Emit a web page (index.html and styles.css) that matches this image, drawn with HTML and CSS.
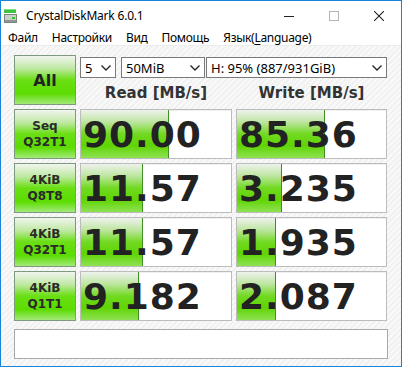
FILE: index.html
```html
<!DOCTYPE html>
<html lang="ru">
<head>
    <meta charset="UTF-8">
    <title>CrystalDiskMark 6.0.1</title>
    <link rel="stylesheet" href="styles.css">
</head>
<body>
<div class="window">
    <div class="titlebar">
        <svg class="app-icon" width="14" height="16" viewBox="0 0 14 16">
            <rect x="0" y="1" width="12" height="4" fill="#3fc43f"/>
            <rect x="0" y="1" width="12" height="1" fill="#7ee07e"/>
            <rect x="0.5" y="6.5" width="12" height="8" fill="#c9cfc9" stroke="#7d867d"/>
            <rect x="1" y="12" width="11" height="2" fill="#8f988f"/>
            <rect x="8" y="9" width="3" height="2" fill="#35c235"/>
        </svg>
        <span class="title">CrystalDiskMark 6.0.1</span>
        <div class="controls">
            <span class="ctl"><svg width="10" height="10" viewBox="0 0 10 10"><line x1="0" y1="5.5" x2="10" y2="5.5" stroke="#222"/></svg></span>
            <span class="ctl"><svg width="10" height="10" viewBox="0 0 10 10"><rect x="0.5" y="0.5" width="9" height="9" fill="none" stroke="#b5b5b5"/></svg></span>
            <span class="ctl"><svg width="10" height="10" viewBox="0 0 10 10"><path d="M0 0L10 10M10 0L0 10" stroke="#222" stroke-width="1.1"/></svg></span>
        </div>
    </div>

    <div class="menubar">
        <span>Файл</span>
        <span>Настройки</span>
        <span>Вид</span>
        <span>Помощь</span>
        <span>Язык(<u>L</u>anguage)</span>
    </div>

    <div class="client">
        <div class="board">
            <div class="btn all">All</div>
            <div class="top-panel">
                <div class="selects">
                    <div class="select count">5<svg width="10" height="6" viewBox="0 0 10 6"><path d="M0.5 0.5L5 5L9.5 0.5" fill="none" stroke="#222" stroke-width="1.3"/></svg></div>
                    <div class="select size">50MiB<svg width="10" height="6" viewBox="0 0 10 6"><path d="M0.5 0.5L5 5L9.5 0.5" fill="none" stroke="#222" stroke-width="1.3"/></svg></div>
                    <div class="select drive">H: 95% (887/931GiB)<svg width="10" height="6" viewBox="0 0 10 6"><path d="M0.5 0.5L5 5L9.5 0.5" fill="none" stroke="#222" stroke-width="1.3"/></svg></div>
                </div>
                <div class="heads">
                    <div>Read [MB/s]</div>
                    <div>Write [MB/s]</div>
                </div>
            </div>

            <div class="btn test">Seq<br>Q32T1</div>
            <div class="meter"><div class="fill" style="width: 88px"></div><span class="value">90.00</span></div>
            <div class="meter"><div class="fill" style="width: 88px"></div><span class="value">85.36</span></div>

            <div class="btn test">4KiB<br>Q8T8</div>
            <div class="meter"><div class="fill" style="width: 62px"></div><span class="value">11.57</span></div>
            <div class="meter"><div class="fill" style="width: 45px"></div><span class="value">3.235</span></div>

            <div class="btn test">4KiB<br>Q32T1</div>
            <div class="meter"><div class="fill" style="width: 62px"></div><span class="value">11.57</span></div>
            <div class="meter"><div class="fill" style="width: 39px"></div><span class="value">1.935</span></div>

            <div class="btn test">4KiB<br>Q1T1</div>
            <div class="meter"><div class="fill" style="width: 58px"></div><span class="value">9.182</span></div>
            <div class="meter"><div class="fill" style="width: 39px"></div><span class="value">2.087</span></div>
        </div>
        <div class="comment"></div>
    </div>
</div>
</body>
</html>
```

FILE: styles.css
```css
body {
    margin: 0;
    padding: 0;
    overflow: hidden;
    background-color: #fff;
}

.window {
    width: 402px;
    height: 367px;
    box-sizing: border-box;
    border: 1px solid #1883d7;
    display: flex;
    flex-direction: column;
    overflow: hidden;
    font-family: "Noto Sans", "DejaVu Sans", sans-serif;
    color: #000;
}

.titlebar {
    height: 29px;
    display: flex;
    align-items: center;
    background-color: #fff;
    flex-shrink: 0;
}

.app-icon {
    margin-left: 3px;
    margin-right: 8px;
}

.title {
    font-size: 12px;
    letter-spacing: -0.2px;
    flex-grow: 1;
}

.controls {
    display: flex;
    height: 100%;
}

.ctl {
    width: 45px;
    display: flex;
    align-items: center;
    justify-content: center;
}

.menubar {
    height: 15px;
    display: flex;
    align-items: center;
    font-size: 12px;
    letter-spacing: -0.3px;
    background-color: #fff;
    flex-shrink: 0;
}

.menubar span {
    padding: 0 7px 0 7px;
}

.menubar u {
    text-underline-offset: 2px;
}

.client {
    flex-grow: 1;
    padding: 9px 13px 0 13px;
    background-color: #f6f6f6;
    background-image: repeating-linear-gradient(135deg, #f9f9f9 0, #f9f9f9 2px, #f1f1f1 2px, #f1f1f1 4px);
    border-top: 1px solid #ececec;
}

.board {
    display: grid;
    grid-template-columns: 62px 152px 151px;
    grid-template-rows: repeat(5, 50px);
    gap: 4px;
}

.btn {
    box-sizing: border-box;
    border: 1px solid #7e9a7e;
    background: linear-gradient(#f1f5ef 0%, #bfe9a3 26%, #6adf14 50%, #5cdc00 78%, #a2ea7a 100%);
    display: flex;
    align-items: center;
    justify-content: center;
    text-align: center;
    font-family: "DejaVu Sans", sans-serif;
    font-weight: bold;
    color: #222;
}

.all {
    font-size: 16px;
}

.test {
    font-size: 12px;
    line-height: 16px;
    color: #2a2a2a;
}

.top-panel {
    grid-column: 2 / 4;
    display: flex;
    flex-direction: column;
}

.selects {
    display: flex;
    margin-top: 2px;
}

.select {
    box-sizing: border-box;
    height: 21px;
    border: 1px solid #7a7a7a;
    background-color: #fff;
    display: flex;
    align-items: center;
    justify-content: space-between;
    padding: 0 4px 0 4px;
    font-size: 13px;
}

.select.count {
    width: 36px;
    margin-right: 5px;
}

.select.size {
    width: 84px;
    margin-right: 1px;
}

.select.drive {
    width: 181px;
}

.heads {
    display: grid;
    grid-template-columns: 152px 151px;
    gap: 4px;
    margin-top: 6px;
    font-family: "DejaVu Sans", sans-serif;
    font-weight: bold;
    font-size: 15px;
    color: #333;
    text-align: center;
}

.meter {
    position: relative;
    box-sizing: border-box;
    border: 1px solid #bcbcbc;
    background-color: #fff;
    box-shadow: inset 1px 1px 0 #f0f0f0;
    display: flex;
    align-items: center;
    overflow: hidden;
}

.fill {
    position: absolute;
    top: 0;
    left: 0;
    bottom: 0;
    box-sizing: border-box;
    border-right: 1px solid #3f8f24;
    background: linear-gradient(#eef2ec 0%, #bde6a0 25%, #72d922 50%, #5fd503 74%, #8fe152 100%);
}

.value {
    position: relative;
    padding-left: 2px;
    font-family: "DejaVu Sans", sans-serif;
    font-weight: bold;
    font-size: 36px;
    letter-spacing: 1px;
    color: #222;
}

.comment {
    margin-top: 8px;
    height: 30px;
    box-sizing: border-box;
    border: 1px solid #a9a9a9;
    background-color: #fff;
}
```
